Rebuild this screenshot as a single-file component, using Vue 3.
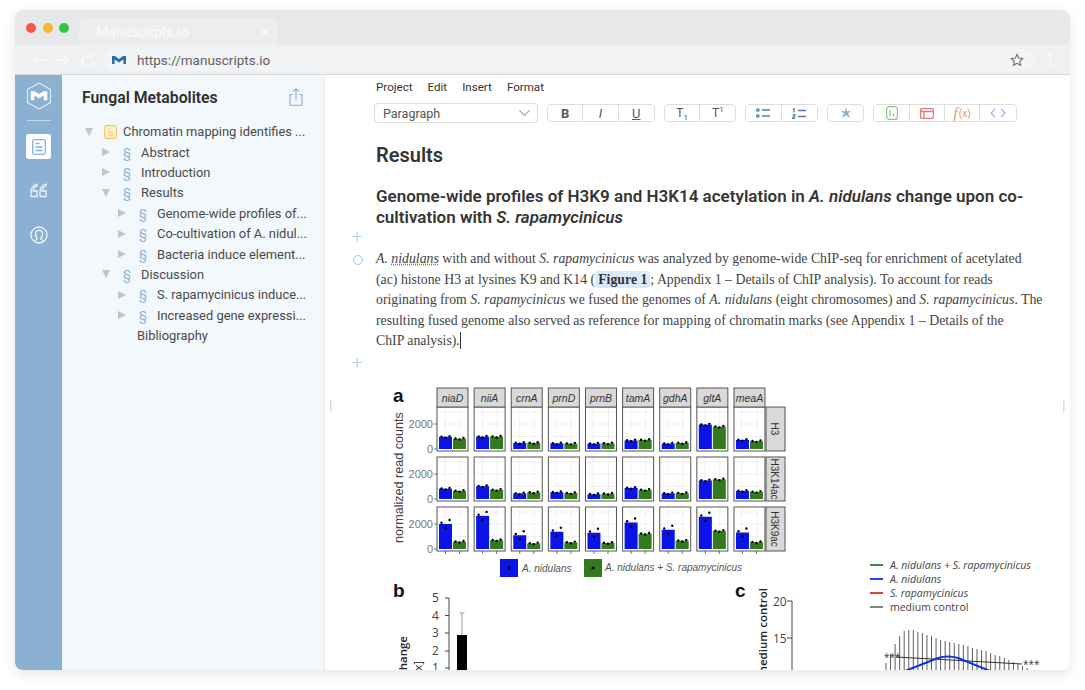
<script setup>
const treeRows = [
  { label: 'Chromatin mapping identifies ...', level: 0, open: true, root: true },
  { label: 'Abstract', level: 1 },
  { label: 'Introduction', level: 1 },
  { label: 'Results', level: 1, open: true },
  { label: 'Genome-wide profiles of...', level: 2 },
  { label: 'Co-cultivation of A. nidul...', level: 2 },
  { label: 'Bacteria induce element...', level: 2 },
  { label: 'Discussion', level: 1, open: true },
  { label: 'S. rapamycinicus induce...', level: 2 },
  { label: 'Increased gene expressi...', level: 2 }
]

const menus = ['Project', 'Edit', 'Insert', 'Format']

// chart a: facets, one bar pair per gene and mark
const genes = ['niaD', 'niiA', 'crnA', 'prnD', 'prnB', 'tamA', 'gdhA', 'gltA', 'meaA']
const panels = [
  { top: 407, bottom: 451, base: 449, mark: 'H3', values: [[970, 820], [980, 980], [480, 480], [450, 430], [430, 450], [680, 720], [430, 480], [1950, 1780], [720, 620]] },
  { top: 457, bottom: 501, base: 499, mark: 'H3K14ac', values: [[820, 650], [1020, 730], [450, 520], [540, 470], [380, 420], [880, 730], [450, 470], [1480, 1560], [650, 570]] },
  { top: 507, bottom: 551, base: 549, mark: 'H3K9ac', values: [[2000, 580], [2650, 700], [1100, 450], [1380, 530], [1300, 480], [2120, 1220], [1540, 660], [2580, 1450], [1320, 540]] }
]
const colX = (i) => 437 + i * 37.12
const barH = (v) => v * 0.0125
// small offsets so the three replicate dots scatter around the bar top
const dots = (x, top, tall) => {
  const spread = tall ? 4 : 0.8
  return [[x + 2.5, top - spread * 0.3], [x + 6.5, top + spread], [x + 10.5, top - spread]]
}

// chart c: hatch of error bars
const hatchTops = [663, 654, 644, 636, 631, 630, 630, 632, 633, 635, 636, 638, 640, 641, 642, 643, 644, 645, 646, 648, 649, 650, 651, 653, 655, 656, 658, 660, 662, 664, 666, 668]
const hatchX = (i) => 886 + i * 4.55
const cLegend = [
  { color: '#2f7d32', label: 'A. nidulans + S. rapamycinicus', y: 565, italic: true },
  { color: '#1030e0', label: 'A. nidulans', y: 579, italic: true },
  { color: '#e02b20', label: 'S. rapamycinicus', y: 593, italic: true },
  { color: '#777', label: 'medium control', y: 607, italic: false }
]
</script>

<template>
  <div class="window">
    <div class="tabbar">
      <div class="lights">
        <span class="light red"></span>
        <span class="light amber"></span>
        <span class="light green"></span>
      </div>
      <div class="tab">
        <span>Manuscripts.io</span>
        <span class="tab-close">×</span>
      </div>
    </div>

    <div class="addressbar">
      <svg class="nav" width="70" height="16" viewBox="0 0 70 16" fill="none" stroke="#fafafa" stroke-width="1.6">
        <path d="M17 8H5M10 3L5 8l5 5" />
        <path d="M27 8h12M34 3l5 5-5 5" />
        <path d="M62 3.6A5.6 5.6 0 1 0 64.6 8M59 3.2l4 .4-.2-4" transform="translate(-.5 1)" />
      </svg>
      <div class="url">
        <svg width="14" height="8" viewBox="0 0 14 8" fill="#2a6ea6"><path d="M0 0h3l4 3 4-3h3v8h-2.6V3.6L7 6.4 2.6 3.6V8H0z" /></svg>
        <span>https://manuscripts.io</span>
        <svg class="star" width="14" height="14" viewBox="0 0 24 24" fill="none" stroke="#666" stroke-width="1.8"><path d="M12 2.5l2.9 6.3 6.9.8-5.1 4.7 1.4 6.8-6.1-3.4-6.1 3.4 1.4-6.8L2.2 9.6l6.9-.8z" /></svg>
      </div>
      <div class="more"><i></i><i></i><i></i></div>
    </div>

    <div class="app">
      <nav class="rail">
        <svg width="26" height="28" viewBox="0 0 26 28" fill="none">
          <path d="M13 1l11.5 6.5v13L13 27 1.500 20.500v-13z" stroke="#fff" stroke-opacity=".8" stroke-width="1.100" stroke-linejoin="round" />
          <path d="M5 9.500h3.500L13 12.500l4.500-3H21v8.500h-3v-5l-5 3-5-3v5H5z" fill="#fff" stroke="#fff" stroke-width=".6" stroke-linejoin="round" />
        </svg>
        <div class="rail-line"></div>
        <div class="rail-active">
          <svg width="14" height="16" viewBox="0 0 14 16" fill="none" stroke="#8ab1d2" stroke-width="1.3">
            <rect x=".7" y=".7" width="12.600" height="14.600" rx="1.500" />
            <path d="M3.500 4.500h4M3.500 8h7M3.500 11.500h7" />
          </svg>
        </div>
        <svg class="rail-quote" width="17" height="15" viewBox="0 0 17 15" fill="none" stroke="#fff" stroke-width="1.300" stroke-opacity=".85">
          <path d="M7 1C3.500 2 1 5 1 9v4.500h6V8H3.200C3.400 5.500 5 3.500 7 2.800z" />
          <path d="M16 1c-3.500 1-6 4-6 8v4.500h6V8h-3.800c.2-2.500 1.800-4.500 3.800-5.200z" />
        </svg>
        <svg class="rail-person" width="18" height="18" viewBox="0 0 18 18" fill="none" stroke="#fff" stroke-width="1.300" stroke-opacity=".9">
          <circle cx="9" cy="9" r="8" />
          <path d="M4.500 14.500c1.500-.5 2.800-1 2.800-2C6 11.500 5.500 10 5.500 8c0-2.300 1.500-3.700 3.500-3.700S12.500 5.700 12.500 8c0 2-.5 3.500-1.800 4.500 0 1 1.300 1.500 2.800 2" />
        </svg>
      </nav>

      <aside class="panel">
        <div class="panel-head">
          <h1>Fungal Metabolites</h1>
          <svg width="14" height="18" viewBox="0 0 14 18" fill="none" stroke="#8ab1d2" stroke-width="1.100">
            <path d="M4 6.500H1v10.800h12V6.500h-3M7 11.500V.8M4 3.500L7 .8l3 2.700" />
          </svg>
        </div>
        <ul class="tree">
          <li v-for="row in treeRows" :key="row.label" class="tree-row" :style="{ paddingLeft: (23 + (row.level ? 1 : 0) + row.level * 16) + 'px' }">
            <span class="arrow" :class="{ open: row.open }"></span>
            <svg v-if="row.root" class="doc" width="13" height="14" viewBox="0 0 13 14" fill="#fdf0cf" stroke="#f3c766" stroke-width="1.100">
              <rect x=".6" y=".6" width="11.800" height="12.800" rx="1.500" />
              <path d="M3.500 4h3M3.500 7h6M3.500 10h6" fill="none" />
            </svg>
            <span v-else class="section">§</span>
            <span class="tree-label">{{ row.label }}</span>
          </li>
          <li class="tree-row biblio">Bibliography</li>
        </ul>
      </aside>

      <main class="main">
        <div class="menu">
          <span v-for="m in menus" :key="m">{{ m }}</span>
        </div>

        <div class="toolbar">
          <div class="select">
            <span>Paragraph</span>
            <svg width="11" height="6" viewBox="0 0 11 6" fill="none" stroke="#aaa" stroke-width="1.200"><path d="M.5.5l5 5 5-5" /></svg>
          </div>
          <div class="group">
            <button class="b3 fmt"><b>B</b></button>
            <button class="b3 fmt"><i>I</i></button>
            <button class="b3 fmt"><u>U</u></button>
          </div>
          <div class="group">
            <button class="b3"><span>T<sub>1</sub></span></button>
            <button class="b3"><span>T<sup>1</sup></span></button>
          </div>
          <div class="group">
            <button class="b3">
              <svg width="15" height="10" viewBox="0 0 15 10" fill="none" stroke="#4f7da6" stroke-width="1.300"><circle cx="1.800" cy="2" r="1.200" /><circle cx="1.800" cy="8" r="1.200" /><path d="M6 2h8M6 8h8" /></svg>
            </button>
            <button class="b3">
              <svg width="15" height="11" viewBox="0 0 15 11" fill="none" stroke="#4f7da6" stroke-width="1.300"><path d="M1 1.200L2 .8v3.600M.6 6.800h2.400L.8 10h2.400M6 2.500h8M6 8.500h8" /></svg>
            </button>
          </div>
          <div class="group">
            <button class="b3">
              <svg width="12" height="12" viewBox="0 0 24 24" fill="#8ab1d2"><path d="M12 0l2 9 9-2-7 6 5 10-9-7-9 7 5-10-7-6 9 2z" /></svg>
            </button>
          </div>
          <div class="group">
            <button class="b3">
              <svg width="12" height="14" viewBox="0 0 12 14" fill="none" stroke="#8cc68c" stroke-width="1.200"><rect x=".6" y=".6" width="10.800" height="12.800" rx="2.500" /><path d="M4 4v6.500M7.500 7.500v3" /></svg>
            </button>
            <button class="b3">
              <svg width="14" height="11" viewBox="0 0 14 11" fill="none" stroke="#e07a78" stroke-width="1.300"><rect x=".6" y=".6" width="12.800" height="9.800" rx="1.500" /><path d="M.6 3.500h12.800M4 3.500v6.900" /></svg>
            </button>
            <button class="b3 fx"><i>f</i><small>(x)</small></button>
            <button class="b3">
              <svg width="16" height="10" viewBox="0 0 16 10" fill="none" stroke="#b0a4f5" stroke-width="1.200"><path d="M5 .8L1 5l4 4.200M11 .8L15 5l-4 4.200" /></svg>
            </button>
          </div>
        </div>

        <article class="doc-body">
          <h2>Results</h2>
          <h3>Genome-wide profiles of H3K9 and H3K14 acetylation in <i>A. nidulans</i> change upon co-<br>cultivation with <i>S. rapamycinicus</i></h3>
          <p class="para">
            <span class="gutter plus top">+</span>
            <span class="gutter ring"></span>
            <i>A. <span class="typo">nidulans</span></i> with and without <i>S. rapamycinicus</i> was analyzed by genome-wide ChIP-seq for enrichment of acetylated<br>
            (ac) histone H3 at lysines K9 and K14 (<b class="xref">Figure 1</b>; Appendix 1 – Details of ChIP analysis). To account for reads<br>
            originating from <i>S. rapamycinicus</i> we fused the genomes of <i>A. nidulans</i> (eight chromosomes) and <i>S. rapamycinicus</i>. The<br>
            resulting fused genome also served as reference for mapping of chromatin marks (see Appendix 1 – Details of the<br>
            ChIP analysis).<span class="caret"></span>
            <span class="gutter plus bottom">+</span>
          </p>
        </article>

        <svg class="figure" width="745" height="290" viewBox="325 380 745 290">
          <rect x="330" y="400" width="1.500" height="12" fill="#ddd" />
          <rect x="1063" y="400" width="1.500" height="12" fill="#ddd" />

          <!-- a -->
          <text x="393" y="402" class="panel-letter">a</text>
          <text transform="translate(403 543) rotate(-90)" class="axis-title">normalized read counts</text>
          <g v-for="p in panels" :key="p.mark">
            <text :x="433" :y="p.base + 4" class="tick" text-anchor="end">0</text>
            <text :x="433" :y="p.base - 21" class="tick" text-anchor="end">2000</text>
            <path :d="`M434 ${p.base}h3M434 ${p.base - 25}h3`" stroke="#555" stroke-width=".8" />
            <g v-for="(pair, i) in p.values" :key="i">
              <rect :x="colX(i)" :y="p.top" width="31" :height="p.bottom - p.top" fill="#fff" />
              <path :d="`M${colX(i) + 8} ${p.top}V${p.bottom}M${colX(i) + 23} ${p.top}V${p.bottom}M${colX(i)} ${p.base - 12.500}h31M${colX(i)} ${p.base - 25}h31M${colX(i)} ${p.base - 37}h31`" stroke="#eee" stroke-width=".8" />
              <rect :x="colX(i) + 2" :y="p.base - barH(pair[0])" width="13" :height="barH(pair[0])" fill="#0a14e6" />
              <rect :x="colX(i) + 16" :y="p.base - barH(pair[1])" width="13" :height="barH(pair[1])" fill="#337a1e" />
              <circle v-for="(d, k) in dots(colX(i) + 2, p.base - barH(pair[0]), pair[0] > 1000 && p.mark === 'H3K9ac')" :key="'b' + k" :cx="d[0]" :cy="d[1]" r="1.200" fill="#000" />
              <circle v-for="(d, k) in dots(colX(i) + 16, p.base - barH(pair[1]), false)" :key="'g' + k" :cx="d[0]" :cy="d[1]" r="1.200" fill="#000" />
              <rect :x="colX(i)" :y="p.top" width="31" :height="p.bottom - p.top" fill="none" stroke="#555" stroke-width="1" />
            </g>
            <rect x="766" :y="p.top" width="19" :height="p.bottom - p.top" fill="#d9d9d9" stroke="#555" stroke-width="1" />
            <text :transform="`translate(771 ${(p.top + p.bottom) / 2}) rotate(90)`" class="strip-mark" text-anchor="middle">{{ p.mark }}</text>
          </g>
          <g v-for="(g, i) in genes" :key="g">
            <rect :x="colX(i)" y="388" width="31" height="19" fill="#d9d9d9" stroke="#555" stroke-width="1" />
            <text :x="colX(i) + 15.500" y="401.500" class="gene" text-anchor="middle">{{ g }}</text>
            <path :d="`M${colX(i) + 8.500} 551v3M${colX(i) + 22.500} 551v3`" stroke="#555" stroke-width=".8" />
          </g>

          <rect x="500" y="559" width="18" height="18" fill="#0a14e6" />
          <circle cx="509" cy="568" r="1.600" fill="#000" />
          <text x="522" y="572" class="legend-a">A. nidulans</text>
          <rect x="584" y="559" width="18" height="18" fill="#337a1e" />
          <circle cx="593" cy="568" r="1.600" fill="#000" />
          <text x="605" y="571" class="legend-a">A. nidulans + S. rapamycinicus</text>

          <!-- b -->
          <text x="393" y="597" class="panel-letter">b</text>
          <text x="432" y="602" class="tick-b">5</text>
          <text x="432" y="620" class="tick-b">4</text>
          <text x="432" y="637" class="tick-b">3</text>
          <text x="432" y="655" class="tick-b">2</text>
          <text x="432" y="672" class="tick-b">1</text>
          <path d="M445 598h4v80M445 615.500h4M445 633h4M445 651h4M445 668h4" fill="none" stroke="#444" stroke-width="1" />
          <path d="M462 635v-22M459.500 613h5" fill="none" stroke="#999" stroke-width="1" />
          <rect x="457" y="635" width="10" height="40" fill="#000" />
          <text transform="translate(407 636) rotate(-90)" class="axis-b" text-anchor="end">change</text>
          <text transform="translate(422 661) rotate(-90)" class="axis-b thin" text-anchor="end">[x]</text>

          <!-- c -->
          <text x="735" y="597" class="panel-letter">c</text>
          <text transform="translate(767 588) rotate(-90)" class="axis-b" text-anchor="end">medium control</text>
          <text x="773" y="606" class="tick-b">20</text>
          <text x="773" y="643" class="tick-b">15</text>
          <path d="M787 601h5v80M787 638h5" fill="none" stroke="#444" stroke-width="1" />
          <path v-for="(top, i) in hatchTops" :key="i" :d="`M${hatchX(i)} ${top}V680`" stroke="#333" stroke-width=".8" />
          <path d="M896 657L950 660L1022 664" fill="none" stroke="#333" stroke-width="1" />
          <path d="M905 671L938 658Q948 655 958 658L990 671" fill="none" stroke="#1030e0" stroke-width="2" />
          <text x="884" y="661" class="stars">***</text>
          <text x="1023" y="668" class="stars">***</text>
          <g v-for="l in cLegend" :key="l.label">
            <path :d="`M870 ${l.y}h13`" :stroke="l.color" stroke-width="1.800" />
            <text x="890" :y="l.y + 4" class="legend-c" :class="{ it: l.italic }">{{ l.label }}</text>
          </g>
        </svg>
      </main>
    </div>
  </div>
</template>

<style>
html, body {
  background: #fff;
  overflow: hidden;
}
</style>

<style scoped>
.window {
  width: 1055px;
  height: 660px;
  margin: 10px 15px 20px;
  border-radius: 8px;
  overflow: hidden;
  box-shadow: 0 4px 14px rgba(0, 0, 0, .1);
  font-family: Roboto, sans-serif;
  color: #353535;
  display: flex;
  flex-direction: column;
}
.tabbar {
  height: 35px;
  background: #e7e8ea;
  display: flex;
  align-items: flex-end;
  flex: none;
}
.lights {
  display: flex;
  gap: 6.500px;
  padding: 0 11px 12px 11px;
}
.light {
  width: 10px;
  height: 10px;
  border-radius: 50%;
}
.red { background: #f9564f; }
.amber { background: #f9b52e; }
.green { background: #2fc840; }
.tab {
  width: 199px;
  height: 27px;
  margin-left: -1px;
  background: #eceded;
  border-radius: 8px 8px 0 0;
  color: #fbfbfb;
  font-size: 14px;
  display: flex;
  align-items: center;
  justify-content: space-between;
  padding: 0 9px 0 17px;
  box-sizing: border-box;
}
.tab-close {
  font-size: 15px;
}
.addressbar {
  height: 30px;
  background: #eff0f2;
  border-bottom: 1px solid #d8d9db;
  display: flex;
  align-items: center;
  flex: none;
  box-sizing: border-box;
}
.nav {
  margin-left: 14px;
  flex: none;
}
.url {
  margin-left: 5px;
  width: 931px;
  height: 22px;
  border-radius: 11px;
  background: #f3f4f6;
  display: flex;
  align-items: center;
  padding: 0 11px 0 8px;
  box-sizing: border-box;
  font-size: 13.500px;
  color: #606060;
  gap: 11px;
  flex: none;
}
.star {
  margin-left: auto;
}
.more {
  display: flex;
  flex-direction: column;
  gap: 2.500px;
  margin-left: 14px;
}
.more i {
  width: 2.500px;
  height: 2.500px;
  background: #fafafa;
  border-radius: 50%;
}
.app {
  flex: 1;
  display: flex;
  min-height: 0;
}
.rail {
  width: 47px;
  flex: none;
  background: #8ab1d2;
  display: flex;
  flex-direction: column;
  align-items: center;
  padding-top: 7px;
  box-sizing: border-box;
}
.rail-line {
  width: 24px;
  height: 1px;
  background: #c5d8e9;
  margin-top: 10px;
}
.rail-active {
  width: 25px;
  height: 25px;
  margin-top: 13px;
  background: #fff;
  border-radius: 3px;
  display: flex;
  align-items: center;
  justify-content: center;
}
.rail-quote {
  margin-top: 24px;
}
.rail-person {
  margin-top: 28px;
}
.panel {
  width: 263px;
  flex: none;
  background: #f3f8fd;
  border-right: 1px solid #e6ecf2;
  box-sizing: border-box;
}
.panel-head {
  display: flex;
  align-items: center;
  justify-content: space-between;
  padding: 12px 21px 0 20px;
  height: 32px;
  box-sizing: border-box;
}
h1 {
  margin: 0;
  font-size: 15.800px;
  font-weight: 600;
  color: #2f2f2f;
}
.tree {
  list-style: none;
  margin: 14.500px 0 0;
  padding: 0;
}
.tree-row {
  display: flex;
  align-items: center;
  height: 20.400px;
  font-size: 12.900px;
  color: #4a4a4a;
}
.arrow {
  width: 19px;
  flex: none;
}
.arrow::before {
  content: '';
  display: block;
  width: 0;
  height: 0;
  border-left: 8px solid #c4c4c4;
  border-top: 4.500px solid transparent;
  border-bottom: 4.500px solid transparent;
}
.arrow.open::before {
  border-top: 8px solid #c4c4c4;
  border-left: 4.500px solid transparent;
  border-right: 4.500px solid transparent;
  border-bottom: 0;
}
.doc {
  width: 13px;
  margin-right: 6px;
  flex: none;
}
.section {
  width: 19px;
  margin-left: 2px;
  margin-right: -1px;
  color: #8ab1d2;
  flex: none;
}
.tree-label {
  white-space: nowrap;
}
.biblio {
  padding-left: 75px;
}
.main {
  flex: 1;
  min-width: 0;
  background: #fff;
  overflow: hidden;
}
.menu {
  display: flex;
  gap: 15px;
  padding-left: 51px;
  font-size: 11.600px;
  height: 24px;
  align-items: center;
  color: #333;
}
.toolbar {
  display: flex;
  gap: 9px;
  padding-left: 49px;
  margin-top: 4px;
  align-items: center;
  height: 20px;
}
.select {
  width: 164px;
  height: 20px;
  border: 1px solid #ddd;
  border-radius: 4px;
  box-sizing: border-box;
  display: flex;
  align-items: center;
  justify-content: space-between;
  padding: 0 7px 0 8px;
  font-size: 12.500px;
  color: #555;
}
.group {
  display: flex;
  height: 18px;
  border: 1px solid #ddd;
  border-radius: 4px;
  box-sizing: border-box;
  overflow: hidden;
}
.b3 {
  width: 35.300px;
  border: 0;
  border-right: 1px solid #ddd;
  background: #fff;
  padding: 0;
  font: 12px Roboto, sans-serif;
  color: #555;
  display: flex;
  align-items: center;
  justify-content: center;
}
.b3:last-child {
  border-right: 0;
}
.b3.fmt {
  font-size: 13px;
}
.b3 sub, .b3 sup {
  font-size: 8px;
  line-height: 0;
}
.fx {
  color: #e39a55;
}
.fx i {
  font-family: "Liberation Serif", serif;
  font-size: 15px;
  margin-right: 1px;
}
.fx small {
  font-size: 10px;
}
.doc-body {
  padding-left: 51px;
  padding-right: 20px;
}
h2 {
  margin: 20px 0 0;
  font-size: 20px;
  line-height: 24px;
  font-weight: 600;
  color: #353535;
}
h3 {
  margin: 19px 0 0;
  font-size: 17px;
  line-height: 21px;
  font-weight: 600;
  color: #353535;
}
.para {
  position: relative;
  margin: 21px 0 0;
  font-family: "Liberation Serif", serif;
  font-size: 13.800px;
  line-height: 20.500px;
  color: #444;
  white-space: nowrap;
}
.typo {
  text-decoration: underline dotted #e8423f;
}
.xref {
  background: #dcebf9;
  border-radius: 4px;
  padding: 1px 3px;
  color: #333;
}
.caret {
  display: inline-block;
  width: 1px;
  height: 17px;
  background: #333;
  vertical-align: -4px;
}
.gutter {
  position: absolute;
  left: -24px;
}
.plus {
  font-family: Roboto, sans-serif;
  font-size: 18px;
  line-height: 18px;
  color: #a8d4f2;
  font-weight: 300;
}
.plus.top {
  top: -21px;
}
.plus.bottom {
  top: 105px;
}
.ring {
  top: 6px;
  left: -23px;
  width: 8px;
  height: 8px;
  border: 1px solid #8fd0f4;
  border-radius: 50%;
}
.figure {
  display: block;
  margin-top: 28px;
}
.panel-letter {
  font: 700 19px "Liberation Sans", sans-serif;
  fill: #111;
}
.axis-title {
  font: 12.600px "Liberation Sans", sans-serif;
  fill: #444;
}
.tick {
  font: 11px "Liberation Sans", sans-serif;
  fill: #777;
}
.gene {
  font: italic 10.500px "Liberation Sans", sans-serif;
  fill: #333;
}
.strip-mark {
  font: 10px "Liberation Sans", sans-serif;
  fill: #333;
}
.legend-a {
  font: italic 10px "Liberation Sans", sans-serif;
  fill: #555;
}
.tick-b {
  font: 12px "Open Sans", sans-serif;
  fill: #444;
}
.axis-b {
  font: 600 11.500px "Open Sans", sans-serif;
  fill: #222;
}
.axis-b.thin {
  font-weight: 400;
}
.stars {
  font: 10px "Open Sans", sans-serif;
  fill: #333;
}
.legend-c {
  font: 10.500px "Open Sans", sans-serif;
  fill: #444;
}
.legend-c.it {
  font-style: italic;
}
</style>
